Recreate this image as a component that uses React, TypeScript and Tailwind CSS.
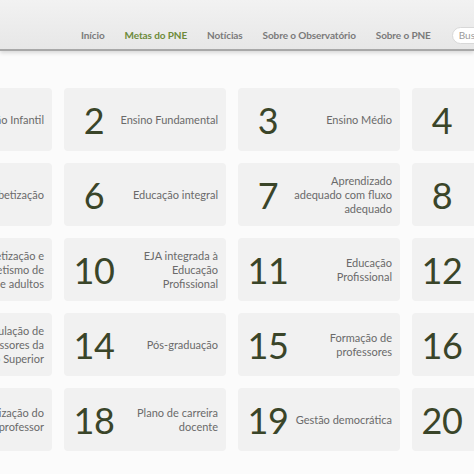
import React from "react";

type Meta = { n: number; lines: string[] };

const rows: Meta[][] = [
  [
    { n: 1, lines: ["Educação Infantil"] },
    { n: 2, lines: ["Ensino Fundamental"] },
    { n: 3, lines: ["Ensino Médio"] },
    { n: 4, lines: ["Educação", "Especial"] },
  ],
  [
    { n: 5, lines: ["Alfabetização"] },
    { n: 6, lines: ["Educação integral"] },
    { n: 7, lines: ["Aprendizado", "adequado com fluxo", "adequado"] },
    { n: 8, lines: ["Escolaridade", "média"] },
  ],
  [
    { n: 9, lines: ["Alfabetização e", "analfabetismo de", "jovens e adultos"] },
    { n: 10, lines: ["EJA integrada à", "Educação", "Profissional"] },
    { n: 11, lines: ["Educação", "Profissional"] },
    { n: 12, lines: ["Educação", "Superior"] },
  ],
  [
    { n: 13, lines: ["Titulação de", "professores da", "Educação Superior"] },
    { n: 14, lines: ["Pós-graduação"] },
    { n: 15, lines: ["Formação de", "professores"] },
    { n: 16, lines: ["Formação", "continuada"] },
  ],
  [
    { n: 17, lines: ["Valorização do", "professor"] },
    { n: 18, lines: ["Plano de carreira", "docente"] },
    { n: 19, lines: ["Gestão democrática"] },
    { n: 20, lines: ["Financiamento", "da educação"] },
  ],
];

function Card({ m }: { m: Meta }) {
  return (
    <div className="flex h-[63px] w-[162px] shrink-0 items-center rounded-[4px] bg-[#f1f1f1] pr-[8px]">
      <div className="ml-[8px] flex w-[44px] shrink-0 justify-center text-[36px] leading-none text-[#3a4529] tracking-[-0.5px]">
        {m.n}
      </div>
      <div className="ml-auto text-right text-[11px] leading-[14px] text-[#6a6a6a]">
        {m.lines.map((l, i) => (
          <div key={i} className="whitespace-nowrap">
            {l}
          </div>
        ))}
      </div>
    </div>
  );
}

export default function App() {
  const nav = ["Início", "Metas do PNE", "Notícias", "Sobre o Observatório", "Sobre o PNE"];
  return (
    <div
      className="h-[474px] w-[474px] overflow-hidden bg-[#fbfbfb]"
      style={{ fontFamily: "Lato, 'Open Sans', sans-serif" }}
    >
      <div className="relative h-[51px] border-b-2 border-[#a8a8a8] bg-gradient-to-b from-[#f2f2f2] to-[#e7e7e7] shadow-[0_2px_4px_rgba(0,0,0,0.14)]">
        <div className="flex h-full items-center gap-[20px] pl-[81px] pt-[22px]">
          {nav.map((t) => (
            <span
              key={t}
              className={`whitespace-nowrap text-[10px] font-bold tracking-[-0.1px] ${
                t === "Metas do PNE" ? "text-[#6d8a3a]" : "text-[#7a7a7a]"
              }`}
            >
              {t}
            </span>
          ))}
          <div className="ml-[1px] flex h-[17px] w-[60px] shrink-0 items-center rounded-full border border-[#d8d8d8] bg-white pl-[6px] text-[10px] text-[#9a9a9a]">
            Buscar
          </div>
        </div>
      </div>
      <div className="ml-[-110px] mt-[37px] flex flex-col gap-[12px]">
        {rows.map((r, i) => (
          <div key={i} className="flex gap-[12px]">
            {r.map((m) => (
              <Card key={m.n} m={m} />
            ))}
          </div>
        ))}
      </div>
    </div>
  );
}
